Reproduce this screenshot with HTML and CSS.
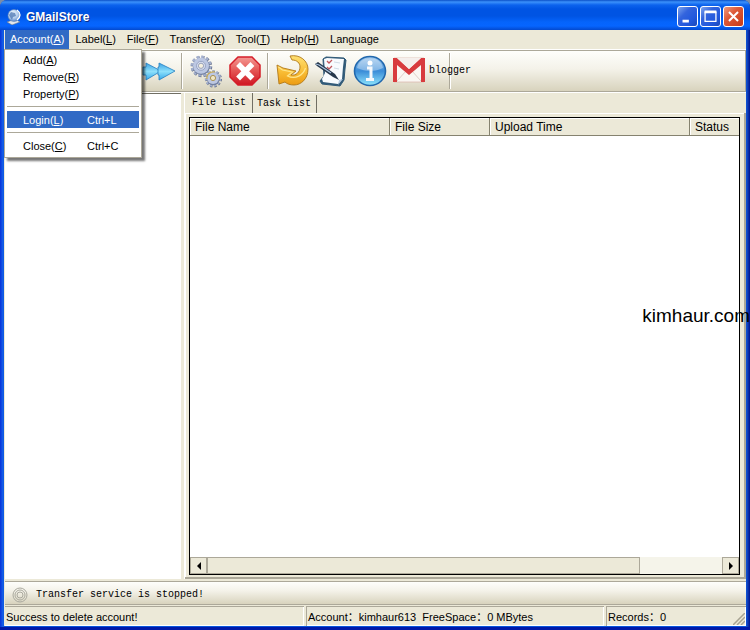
FILE: index.html
```html
<!DOCTYPE html>
<html lang="en">
<head>
<meta charset="utf-8">
<title>GMailStore</title>
<link rel="stylesheet" href="styles.css">
</head>
<body>
<div class="window">
  <header class="titlebar">
    <svg class="app-icon" viewBox="0 0 16 16" aria-hidden="true">
      <defs><radialGradient id="globe" cx=".4" cy=".3" r=".7"><stop offset="0" stop-color="#eef7ff"/><stop offset=".6" stop-color="#b4cdec"/><stop offset="1" stop-color="#5f8bcb"/></radialGradient></defs>
      <path d="M1 13l8-3 5 3-8 3z" fill="#e3e6ec" stroke="#65738c" stroke-width=".6"/>
      <circle cx="8" cy="6.500" r="6" fill="url(#globe)" stroke="#5d82b8" stroke-width=".6"/>
      <path d="M5 3l4 1 1 3-3 1-1 3-2-3-1-2z" fill="#456fae" opacity=".7"/>
      <path d="M11 1c4 3 4 7 0 10" fill="none" stroke="#fff" stroke-width="1.300"/>
    </svg>
    <h1>GMailStore</h1>
    <div class="window-buttons">
      <button class="win-btn" aria-label="Minimize"><svg viewBox="0 0 21 21"><path d="M5 15.500h7" stroke="#fff" stroke-width="3"/></svg></button>
      <button class="win-btn" aria-label="Maximize"><svg viewBox="0 0 21 21"><path d="M4.500 5v11h12V5" fill="none" stroke="#fff" stroke-width="1.400"/><path d="M4 5.500h13" stroke="#fff" stroke-width="3"/></svg></button>
      <button class="win-btn close" aria-label="Close"><svg viewBox="0 0 21 21"><path d="M5.500 5.500l10 10m0-10l-10 10" stroke="#fff" stroke-width="2.200"/></svg></button>
    </div>
  </header>

  <div class="client">
    <nav class="menubar">
      <div class="menu-holder">
        <button class="menu open">Account(<u>A</u>)</button>
        <div class="dropdown">
          <button class="item"><span>Add(<u>A</u>)</span></button>
          <button class="item"><span>Remove(<u>R</u>)</span></button>
          <button class="item"><span>Property(<u>P</u>)</span></button>
          <hr>
          <button class="item selected"><span>Login(<u>L</u>)</span><span>Ctrl+L</span></button>
          <hr>
          <button class="item"><span>Close(<u>C</u>)</span><span>Ctrl+C</span></button>
        </div>
      </div>
      <button class="menu">Label(<u>L</u>)</button>
      <button class="menu">File(<u>F</u>)</button>
      <button class="menu">Transfer(<u>X</u>)</button>
      <button class="menu">Tool(<u>T</u>)</button>
      <button class="menu">Help(<u>H</u>)</button>
      <button class="menu">Language</button>
    </nav>

    <div class="toolbar">
      <button class="tool" aria-label="Forward">
        <svg viewBox="0 0 34 34">
          <defs><linearGradient id="arrow" x2="0" y2="1"><stop offset="0" stop-color="#3da2e4"/><stop offset=".5" stop-color="#8de0fb"/><stop offset="1" stop-color="#35a8ea"/></linearGradient></defs>
          <path d="M1 13h3V9l15 8-15 9v-5H1z" fill="url(#arrow)" stroke="#247fc0" stroke-width=".8"/>
          <path d="M16 13h1V9l16 8-16 9v-5h-1z" fill="url(#arrow)" stroke="#247fc0" stroke-width=".8"/>
        </svg>
      </button>
      <span class="separator"></span>
      <button class="tool" aria-label="Settings">
        <svg viewBox="0 0 34 34">
          <circle cx="12.500" cy="12.500" r="9" fill="none" stroke="#66718c" stroke-width="3.500" stroke-dasharray="2.600 2.112"/>
          <circle cx="12" cy="12" r="9" fill="none" stroke="#a3afcd" stroke-width="3" stroke-dasharray="2.600 2.112"/>
          <circle cx="12.300" cy="12.500" r="8.500" fill="#7380a0"/>
          <circle cx="12" cy="11.800" r="8" fill="#bcc7e2"/>
          <circle cx="12" cy="11.800" r="4.500" fill="#d8def0" stroke="#97a4c4"/>
          <circle cx="12" cy="11.800" r="2.600" fill="#f5f0df" stroke="#8591ad" stroke-width=".8"/>
          <circle cx="24.500" cy="25" r="7" fill="none" stroke="#66718c" stroke-width="3" stroke-dasharray="2.100 1.898"/>
          <circle cx="24" cy="24.500" r="7" fill="none" stroke="#a3afcd" stroke-width="2.500" stroke-dasharray="2.100 1.898"/>
          <circle cx="24.300" cy="24.800" r="6.500" fill="#7380a0"/>
          <circle cx="24" cy="24" r="6" fill="#bcc7e2"/>
          <path d="M18 25c-1-5 4-8 8-7" fill="none" stroke="#c9ab55" stroke-width="1.200"/>
          <circle cx="24" cy="24" r="2.600" fill="#efe5c4" stroke="#a99256"/>
        </svg>
      </button>
      <button class="tool" aria-label="Stop">
        <svg viewBox="0 0 34 34">
          <defs><linearGradient id="stop" x2="0" y2="1"><stop offset="0" stop-color="#f39a94"/><stop offset=".45" stop-color="#e65a58"/><stop offset="1" stop-color="#cf1521"/></linearGradient></defs>
          <path d="M10 3h14l8 8v12l-8 8H10l-8-8V11z" fill="url(#stop)" stroke="#d51e29" stroke-width="1.500"/>
          <path d="M12 12l10.500 10.500m0-10.500L12 22.500" stroke="#fff" stroke-width="5.500" stroke-linecap="square"/>
        </svg>
      </button>
      <span class="separator"></span>
      <button class="tool" aria-label="Refresh">
        <svg viewBox="0 0 34 34">
          <defs><linearGradient id="gold" x2="0" y2="1"><stop offset="0" stop-color="#ffe173"/><stop offset=".55" stop-color="#f9bd35"/><stop offset="1" stop-color="#ec9b12"/></linearGradient></defs>
          <path d="M15 2c10-2 18 5 18 13 0 10-7 16-14 16-4 0-7-1-9-3l-6 2L2 11l6 3 13 3-5 4c5 1 9-3 9-8 0-4-3-7-8-7z" fill="url(#gold)" stroke="#b07819" stroke-width=".9" stroke-linejoin="round"/>
          <path d="M3.500 13l4 3 10 2-5 4c8 4 16-1 18-8" fill="none" stroke="#ffe68b" stroke-width="1.200"/>
        </svg>
      </button>
      <button class="tool" aria-label="Tasks">
        <svg viewBox="0 0 34 34">
          <path d="M9 5l3-2 18 1 2 2-1 9-1 11-4 6-18-2-2-3 4-5z" fill="#315a78" stroke="#315a78" stroke-linejoin="round"/>
          <path d="M10 5l3-1 17 1-1 8-1 12-4 5-15-2-1-3 3-6z" fill="#f8fbfe"/>
          <path d="M29 25l-4 1-1 5z" fill="#b6cbe2"/>
          <path d="M13 7l2 2 3-3M13 13l2 2 3-3" fill="none" stroke="#c0565d" stroke-width="1.300"/>
          <path d="M20 8l6 1M20 14l5 1" stroke="#cfdbe6"/>
          <path d="M1 10l3-2 17 12 4 6-6-3L3 12z" fill="#26384c"/><path d="M2 10l3 1 12 8" fill="none" stroke="#a9c2de" stroke-width="1.200"/>
        </svg>
      </button>
      <button class="tool" aria-label="Information">
        <svg viewBox="0 0 34 34">
          <defs><linearGradient id="info" x2="0" y2="1"><stop offset="0" stop-color="#9bc5ec"/><stop offset=".5" stop-color="#3a8cd8"/><stop offset="1" stop-color="#8ee5fc"/></linearGradient></defs>
          <ellipse cx="17" cy="17" rx="15.500" ry="14.500" fill="url(#info)" stroke="#2268ad" stroke-width="1.600"/>
          <path d="M4 14C6 1 28 1 30 14c-8 4-17 4-26 0z" fill="#fff" opacity=".35"/>
          <circle cx="17" cy="9" r="2.500" fill="#fff"/><path d="M14 14h4v11M13 25.500h8" fill="none" stroke="#f4f8fc" stroke-width="3"/>
        </svg>
      </button>
      <button class="tool labelled">
        <svg viewBox="0 0 34 34">
          <path d="M2 4h30v24H2z" fill="#faf7f3" stroke="#d9b1ab" stroke-width=".7"/>
          <path d="M5 27l9-10m15 10l-9-10" stroke="#dfcfc9" stroke-width="1"/>
          <path d="M1 4h4l12 11L29 4h4v24h-4V11L17 21 5 11v17H1z" fill="#d83b3e"/>
          <path d="M5 4h24L17 15z" fill="#f5efec"/>
        </svg>
        <span>blogger</span>
      </button>
      <span class="separator"></span>
    </div>

    <main class="workspace">
      <aside class="accounts" aria-label="Accounts"></aside>
      <section class="files">
        <div class="tabs" role="tablist">
          <button class="tab active" role="tab" aria-selected="true">File List</button>
          <button class="tab" role="tab" aria-selected="false">Task List</button>
        </div>
        <div class="page">
          <div class="listview">
            <table>
              <colgroup><col class="wide"><col class="narrow"><col class="wide"><col></colgroup>
              <thead><tr><th>File Name</th><th>File Size</th><th>Upload Time</th><th>Status</th></tr></thead>
            </table>
            <div class="scrollbar">
              <button class="scroll-btn" aria-label="Scroll left"><svg viewBox="0 0 8 8"><path d="M6 0v8L2 4z"/></svg></button>
              <div class="track"><div class="thumb"></div></div>
              <button class="scroll-btn" aria-label="Scroll right"><svg viewBox="0 0 8 8"><path d="M2 0v8l4-4z"/></svg></button>
            </div>
          </div>
        </div>
      </section>
    </main>

    <div class="service">
      <svg viewBox="0 0 16 16" aria-hidden="true"><g fill="none" stroke="#aaa99e"><circle cx="8" cy="8" r="7"/><circle cx="8" cy="8" r="5"/><circle cx="8" cy="8" r="3"/></g></svg>
      <span>Transfer service is stopped!</span>
    </div>
    <footer class="status">
      <span class="cell">Success to delete account!</span>
      <span class="cell">Account：kimhaur613 &nbsp;FreeSpace：0 MBytes</span>
      <span class="cell">Records：0</span>
      <svg class="grip" viewBox="0 0 12 12" aria-hidden="true"><path d="M0 12L12 0M4 12l8-8M8 12l4-4" stroke="#a7a391" stroke-width="1.500"/></svg>
    </footer>
  </div>
  <div class="watermark">kimhaur.com</div>
</div>
</body>
</html>
```
FILE: styles.css
```css
* { box-sizing: border-box; }

body {
  margin: 0;
  background: #7b8da8;
  color: #000;
  font: 11px/14px "Liberation Sans", "Noto Sans CJK SC", sans-serif;
}

button {
  margin: 0;
  padding: 0;
  border: 0;
  background: none;
  color: inherit;
  font: inherit;
}

svg { display: block; }

.window {
  position: relative;
  display: flex;
  flex-direction: column;
  min-height: 100vh;
  padding: 0 4px 4px;
  overflow: hidden;
  border-radius: 7px 7px 0 0;
  background: linear-gradient(90deg, #0831d9, #1661e8 3px, #0855dd 4px, #0855dd calc(100% - 4px), #1248c4 calc(100% - 3px), #00138c);
  box-shadow: inset 0 -3px #0019a8;
}

.titlebar {
  display: flex;
  align-items: center;
  height: 30px;
  margin: 0 -4px;
  padding: 3px 6px 0;
  background: linear-gradient(#0b50c8, #3b91fb 2px, #0c63ed 5px, #0054e3 9px, #0054e3 16px, #0564fb 22px, #0665ff 26px, #0349ce 30px);
  color: #fff;
}

.app-icon { width: 16px; height: 16px; }

h1 {
  flex: 1;
  margin: 0 0 0 4px;
  font-size: 12px;
  line-height: 16px;
  text-shadow: 1px 1px #0b2b86;
}

.window-buttons { display: flex; gap: 2px; }

.win-btn {
  width: 21px;
  height: 21px;
  border: 1px solid #fff;
  border-radius: 3px;
  background: linear-gradient(135deg, #7da5ee, #3364dd 35%, #2158dd 70%, #1c49b8);
}

.win-btn svg { width: 19px; height: 19px; }
.win-btn.close { background: linear-gradient(135deg, #ee9a7e, #dd5938 40%, #c73a18); }

.client {
  display: flex;
  flex: 1;
  flex-direction: column;
  padding-left: 1px;
  background: #ece9d8;
}

.menubar {
  display: flex;
  height: 20px;
  border-bottom: 1px solid #fff;
}

.menu {
  height: 19px;
  padding: 0 5px 1px 6px;
}

.menu.open,
.selected {
  background: #316ac5;
  color: #fff;
}

.menu-holder { position: relative; }
.menu.open { padding: 0 5px 1px; }

.dropdown {
  position: absolute;
  z-index: 2;
  top: 19px;
  left: -1px;
  width: 138px;
  padding: 1px 2px 3px;
  border: 1px solid #aca899;
  background: #fff;
  box-shadow: 3px 3px 2px #0008;
}

.item {
  display: grid;
  grid-template-columns: 64px 1fr;
  width: 100%;
  height: 17px;
  padding: 0 16px;
  align-items: center;
  text-align: left;
}

.dropdown hr {
  height: 1px;
  margin: 4px 0;
  border: 0;
  background: #aca899;
}

.toolbar {
  display: flex;
  align-items: center;
  height: 42px;
  padding-left: 134px;
  border: solid #aca899;
  border-width: 1px 1px 1px 0;
  background: linear-gradient(#fefefb, #f4f2e9 45%, #d8d3bd);
}

.tool { width: 39px; height: 38px; }

.tool svg {
  width: 34px;
  height: 34px;
  margin: 0 auto;
}

.tool.labelled {
  position: relative;
  z-index: 1;
  display: flex;
  align-items: center;
  gap: 3px;
  width: 57px;
  padding-left: 3px;
  white-space: nowrap;
}

.labelled svg { flex: none; margin: 0; }

.separator {
  width: 8px;
  height: 36px;
  background: linear-gradient(90deg, #aca899 1px, #fff 1px) center / 2px 100% no-repeat;
}

.tool.labelled,
.tab,
.service { font: 10px/14px "Liberation Mono", monospace; }

.workspace {
  display: flex;
  flex: 1;
  gap: 3px;
  border-top: 1px solid #fff;
}

.accounts {
  width: 176px;
  border-top: 1px solid #716f64;
  background: #fff;
}

.files {
  display: flex;
  flex: 1;
  flex-direction: column;
  min-width: 0;
  border-left: 1px solid #fff;
}

.tabs {
  display: flex;
  align-items: flex-end;
  height: 20px;
  padding-left: 2px;
}

.tab {
  height: 18px;
  padding: 0 5px 0 4px;
  border-right: 1px solid #716f64;
}

.tab.active {
  height: 20px;
  padding: 0 6px 0 5px;
}

.page {
  display: flex;
  flex: 1;
  padding: 4px 4px 2px;
  border: solid #aca899;
  border-width: 0 2px 2px 0;
  box-shadow: inset 1px 1px #fff;
}

.listview {
  display: flex;
  flex: 1;
  flex-direction: column;
  min-width: 0;
  border: 1px solid #000;
  background: #fff;
}

table {
  width: 100%;
  table-layout: fixed;
  border-collapse: separate;
  border-spacing: 0;
  font-size: 12px;
}

.wide { width: 200px; }
.narrow { width: 100px; }

th {
  height: 18px;
  padding: 1px 5px 0;
  border: solid #85826f;
  border-width: 0 1px 1px 0;
  background: #ece9d8;
  box-shadow: inset 1px 1px #fff;
  font-weight: normal;
  text-align: left;
}

th:last-child { border-right: 0; }

.scrollbar {
  display: flex;
  height: 17px;
  margin-top: auto;
}

.scroll-btn {
  width: 17px;
  border: 1px solid #aca899;
  background: #ece9d8;
}

.scroll-btn svg { width: 8px; height: 8px; margin: 0 auto; }

.track { flex: 1; background: #f5f4ea; }

.thumb {
  width: 84%;
  height: 100%;
  border: 1px solid #aca899;
  background: #ece9d8;
}

.service {
  display: flex;
  align-items: center;
  gap: 8px;
  height: 24px;
  margin-top: 2px;
  padding: 3px 0 0 7px;
  border: solid #aca899;
  border-width: 1px 0;
  background: linear-gradient(#fefefb, #f4f2e9 40%, #d8d3bd);
}

.service svg { width: 16px; height: 16px; }

.status {
  position: relative;
  display: grid;
  grid-template-columns: 299fr 298fr 140fr;
  gap: 2px;
  height: 20px;
  margin-top: 1px;
}

.cell {
  overflow: hidden;
  padding: 3px 1px;
  border: solid #aca899;
  border-width: 1px 0 0 1px;
  box-shadow: inset -1px -1px #fff;
  white-space: nowrap;
}

.cell:first-child { border-left: 0; }

.grip {
  position: absolute;
  right: 1px;
  bottom: 1px;
  width: 12px;
  height: 12px;
}

.watermark {
  position: absolute;
  top: 50%;
  right: 0;
  font-size: 19px;
  line-height: 22px;
  margin-top: -10px;
}
```
